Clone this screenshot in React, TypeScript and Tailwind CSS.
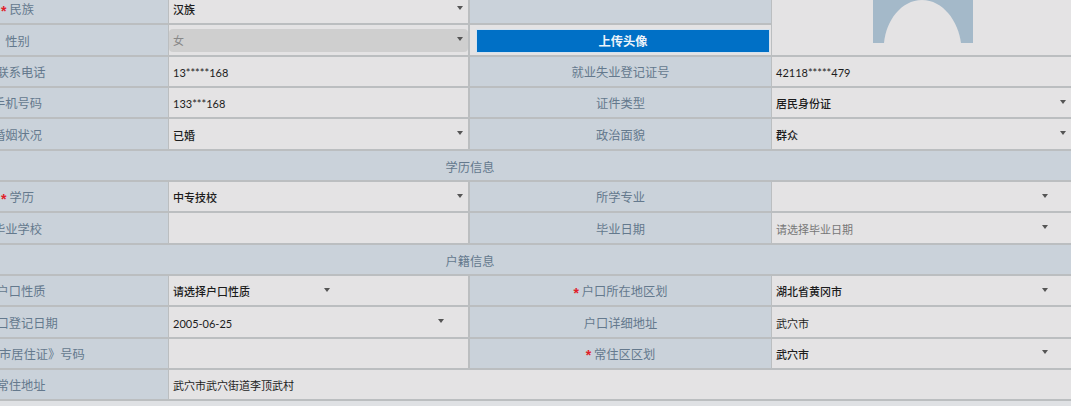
const FONT = "font-['Lato','Noto_Sans_CJK_SC',sans-serif]";
const LABEL = 'flex h-full items-center justify-center bg-[#cad2da] pt-[4px] text-[12.25px] text-[#64798d]';
const VALUE = 'relative flex h-full items-center bg-[#e4e3e4] pl-[4px] pt-[4px] text-[11px] text-[#1c1c1c]';
const LINE = 'border-b-2 border-[#bbbec0]';

const Caret = ({ x }: { x: number }) => (
  <svg width="6" height="4" viewBox="0 0 6 4" className="absolute top-[calc(50%-3px)]" style={{ left: x }}>
    <path d="M0 0h6L3 4z" fill="#555" />
  </svg>
);

const Label = ({ text, star, pad }: { text?: string; star?: boolean; pad?: number }) => (
  <div className={LABEL} style={pad ? { paddingLeft: pad } : undefined}>
    {star && (
      <span className="mr-[3px] font-['Liberation_Sans',sans-serif] text-[14px] font-bold leading-none text-[#e0202a]">*</span>
    )}
    {text}
  </div>
);

// caret offset is relative to the cell, the selects have different widths
const Value = ({ text, caret, weight }: { text?: string; caret?: number; weight?: boolean }) => (
  <div className={VALUE}>
    <span className={weight ? 'font-medium' : ''}>{text}</span>
    {caret !== undefined && <Caret x={caret} />}
  </div>
);

const Row = ({ children }: { children: React.ReactNode }) => (
  <div className={`grid h-[31.33px] shrink-0 grid-cols-[301px_1px_299px_2px_301px_1px_301px] ${LINE}`}>{children}</div>
);

const Sep = () => <div className="h-full bg-[#bbbec0]" />;

const Section = ({ title }: { title: string }) => (
  <div className={`flex h-[31.33px] shrink-0 items-center justify-center bg-[#cad2da] pt-[6px] text-[12.25px] text-[#64798d] ${LINE}`}>
    {title}
  </div>
);

const Avatar = () => (
  <svg width="100" height="44" viewBox="0 0 100 44" className="absolute left-[101px] top-0">
    <path d="M0 0h100v44H0z" fill="#a4b9c9" />
    <path d="M11 44C13 22 28 1 49 1C70 1 85 22 88 44z" fill="#e4e3e4" />
  </svg>
);

export default function App() {
  return (
    <div className={`h-[406px] w-[1071px] overflow-hidden bg-[#dfe1e4] ${FONT}`}>
      <div className="-ml-[133px] -mt-[6px] flex w-[1206px] flex-col">
        <Row>
          <Label text="民族" star />
          <Sep />
          <Value text="汉族" caret={288} weight />
          <Sep />
          <div className="h-full bg-[#cad2da]" />
          <Sep />
          <div className="bg-[#e4e3e4]" />
        </Row>
        <div className="relative">
          <Row>
            <Label text="性别" />
            <Sep />
            <div className="relative flex h-full items-center bg-[#e4e3e4] pt-[1px] text-[11px]">
              <div className="flex h-[23px] w-full items-center rounded-[4px] bg-[#cfcfcf] pl-[4px] pt-[2px] text-[#888]">女</div>
              <Caret x={288} />
            </div>
            <Sep />
            <div className="flex h-full items-center bg-[#e4e3e4] pl-[6px] pt-[2px]">
              <button className="h-[24px] w-[294px] border border-[#d4e2ee] bg-[#0070c6] pt-[2px] text-[12.25px] font-bold text-[#eef4fa]">
                上传头像
              </button>
            </div>
            <Sep />
            <div className="bg-[#e4e3e4]" />
          </Row>
          <div className="absolute bottom-[2px] left-[905px] h-[60px] w-[301px] overflow-hidden bg-[#e4e3e4]">
            <div className="absolute left-0 top-[4px]">
              <Avatar />
            </div>
          </div>
        </div>
        <Row>
          <Label text="联系电话" pad={7} />
          <Sep />
          <Value text="13*****168" />
          <Sep />
          <Label text="就业失业登记证号" />
          <Sep />
          <Value text="42118*****479" />
        </Row>
        <Row>
          <Label text="手机号码" />
          <Sep />
          <Value text="133***168" />
          <Sep />
          <Label text="证件类型" />
          <Sep />
          <Value text="居民身份证" caret={288} weight />
        </Row>
        <Row>
          <Label text="婚姻状况" />
          <Sep />
          <Value text="已婚" caret={288} weight />
          <Sep />
          <Label text="政治面貌" />
          <Sep />
          <Value text="群众" caret={288} weight />
        </Row>
        <Section title="学历信息" />
        <Row>
          <Label text="学历" star />
          <Sep />
          <Value text="中专技校" caret={288} weight />
          <Sep />
          <Label text="所学专业" />
          <Sep />
          <Value caret={270} />
        </Row>
        <Row>
          <Label text="毕业学校" />
          <Sep />
          <Value />
          <Sep />
          <Label text="毕业日期" />
          <Sep />
          <div className={VALUE + ' !text-[#777]'}>
            请选择毕业日期
            <Caret x={270} />
          </div>
        </Row>
        <Section title="户籍信息" />
        <Row>
          <Label text="户口性质" pad={7} />
          <Sep />
          <Value text="请选择户口性质" caret={155} weight />
          <Sep />
          <Label text="户口所在地区划" star />
          <Sep />
          <Value text="湖北省黄冈市" caret={270} weight />
        </Row>
        <Row>
          <Label text="户口登记日期" pad={7} />
          <Sep />
          <Value text="2005-06-25" caret={269} />
          <Sep />
          <Label text="户口详细地址" />
          <Sep />
          <Value text="武穴市" />
        </Row>
        <Row>
          <Label text="《武汉市居住证》号码" pad={12} />
          <Sep />
          <Value />
          <Sep />
          <Label text="常住区区划" star />
          <Sep />
          <Value text="武穴市" caret={270} weight />
        </Row>
        <div className={`grid h-[31.33px] shrink-0 grid-cols-[301px_1px_904px] ${LINE}`}>
          <Label text="常住地址" pad={7} />
          <Sep />
          <Value text="武穴市武穴街道李顶武村" />
        </div>
      </div>
    </div>
  );
}
